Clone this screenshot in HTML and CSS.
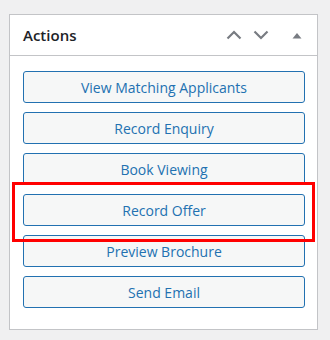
FILE: index.html
```html
<!DOCTYPE html>
<html>
<head>
<meta charset="utf-8">
<link rel="stylesheet" href="styles.css">
</head>
<body>
<div class="page">
  <div class="postbox">
    <div class="postbox-header">
      <h2 class="title">Actions</h2>
      <div class="controls">
        <svg class="chev" width="16" height="10" viewBox="0 0 16 10"><path d="M1.5 8.5 L8 2 L14.5 8.5" fill="none" stroke="#787c82" stroke-width="2.2"/></svg>
        <svg class="chev" width="16" height="10" viewBox="0 0 16 10"><path d="M1.5 1.5 L8 8 L14.5 1.5" fill="none" stroke="#787c82" stroke-width="2.2"/></svg>
        <svg class="tri" width="10" height="7" viewBox="0 0 10 7"><path d="M0.5 6.5 L5 1 L9.5 6.5 Z" fill="#787c82"/></svg>
      </div>
    </div>
    <div class="inside">
      <button class="btn">View Matching Applicants</button>
      <button class="btn">Record Enquiry</button>
      <button class="btn">Book Viewing</button>
      <button class="btn">Record Offer</button>
      <button class="btn">Preview Brochure</button>
      <button class="btn">Send Email</button>
    </div>
  </div>
  <div class="highlight"></div>
</div>
</body>
</html>
```
FILE: styles.css
```css
html, body {
  margin: 0;
  padding: 0;
  background: #f0f0f1;
}
.page {
  position: relative;
  padding: 14px 0 0 9px;
  width: 330px;
  height: 340px;
  box-sizing: border-box;
  font-family: "Open Sans", "Noto Sans", sans-serif;
}
.postbox {
  width: 309px;
  box-sizing: border-box;
  background: #fff;
  border: 1px solid #c3c4c7;
}
.postbox-header {
  height: 41px;
  box-sizing: border-box;
  border-bottom: 1px solid #c3c4c7;
  display: flex;
  align-items: center;
  padding-left: 13px;
}
.title {
  margin: 0;
  flex: 1;
  font-size: 15px;
  font-weight: 600;
  color: #1d2327;
  line-height: 1;
}
.controls {
  display: flex;
  align-items: center;
  padding-right: 15px;
}
.chev {
  display: block;
  margin-right: 11px;
}
.tri {
  display: block;
  margin-left: 12px;
}
.inside {
  display: flex;
  flex-direction: column;
  gap: 9px;
  padding: 15px 12px 21px 13px;
}
.btn {
  height: 32px;
  width: 100%;
  box-sizing: border-box;
  margin: 0;
  padding: 0 10px;
  border: 1px solid #2271b1;
  border-radius: 3px;
  background: #f6f7f7;
  color: #2271b1;
  font-family: "Open Sans", "Noto Sans", sans-serif;
  font-size: 14px;
  text-align: center;
}
.highlight {
  position: absolute;
  left: 12px;
  top: 182px;
  width: 303px;
  height: 60px;
  box-sizing: border-box;
  border: 3px solid #ff0000;
}
```
